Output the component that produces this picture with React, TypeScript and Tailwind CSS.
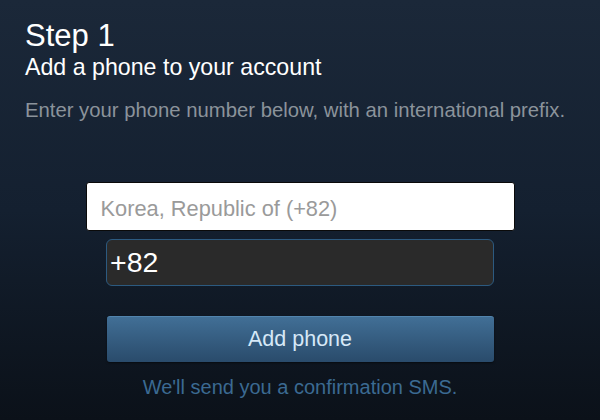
export default function App() {
  return (
    <div className="w-[600px] h-[420px] overflow-hidden bg-gradient-to-b from-[#1b2839] via-[#142030] to-[#0b1119] px-[25px] pt-[18px] font-['Liberation_Sans',Arial,sans-serif]">
      <h1 className="text-[31px] leading-[35px] text-white">Step 1</h1>
      <h2 className="text-[23.2px] leading-[28px] text-white">Add a phone to your account</h2>
      <p className="mt-[17px] text-[20.3px] leading-[24px] text-[#8b939b]">
        Enter your phone number below, with an international prefix.
      </p>

      <div className="mt-[60px] flex flex-col items-center">
        <input
          type="text"
          placeholder="Korea, Republic of (+82)"
          className="w-[429px] h-[49px] rounded-[3px] border border-[#0a0a0a] bg-white pl-[14px] pt-[4px] text-[21.8px] text-black outline-none placeholder:text-[#9a9a9a]"
        />
        <input
          type="text"
          defaultValue="+82"
          className="mt-[8px] w-[388px] h-[47px] rounded-[6px] border-[1.5px] border-[#2c5a80] bg-[#2a2a2a] pl-[3px] text-[28.5px] text-white outline-none"
        />
        <button className="mt-[30px] w-[387px] h-[46px] rounded-[3px] border-t border-[#5284ad] bg-gradient-to-b from-[#416f96] to-[#2a4b6b] text-[21.5px] text-[#d6e8f7] shadow-[0_1px_2px_rgba(0,0,0,0.5)]">
          Add phone
        </button>
        <p className="mt-[13px] text-[20px] leading-[24px] text-[#3b6a92]">We'll send you a confirmation SMS.</p>
      </div>
    </div>
  );
}
